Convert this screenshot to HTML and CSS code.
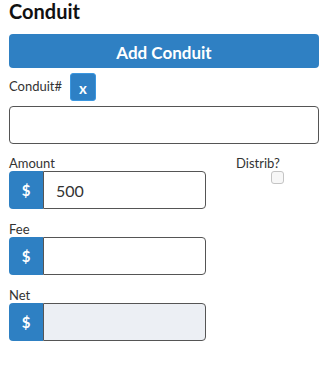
FILE: index.html
```html
<!DOCTYPE html>
<html>
<head>
<meta charset="utf-8">
<link rel="stylesheet" href="styles.css">
</head>
<body>
<div class="page">
  <h1 class="title">Conduit</h1>
  <button class="btn-add">Add Conduit</button>
  <div class="conduit-row">
    <span class="label">Conduit#</span>
    <button class="btn-x">x</button>
  </div>
  <input class="text-input" type="text">
  <div class="money-grid">
    <div class="money-col">
      <div class="field">
        <div class="label">Amount</div>
        <div class="group">
          <span class="addon">$</span>
          <input class="group-input" type="text" value="500">
        </div>
      </div>
      <div class="field">
        <div class="label">Fee</div>
        <div class="group">
          <span class="addon">$</span>
          <input class="group-input" type="text">
        </div>
      </div>
      <div class="field">
        <div class="label">Net</div>
        <div class="group">
          <span class="addon">$</span>
          <input class="group-input readonly" type="text" readonly>
        </div>
      </div>
    </div>
    <div class="distrib-col">
      <div class="label">Distrib?</div>
      <span class="checkbox"></span>
    </div>
  </div>
</div>
</body>
</html>
```
FILE: styles.css
```css
* { box-sizing: border-box; }
body {
  margin: 0;
  font-family: Lato, "Open Sans", sans-serif;
  color: #222;
  background: #fff;
}
.page {
  padding: 0 9px;
  width: 328px;
}
.title {
  margin: 0 0 12px;
  font-size: 20px;
  line-height: 22px;
  font-weight: 700;
  color: #111;
}
.btn-add {
  display: block;
  width: 100%;
  height: 34px;
  border: none;
  border-radius: 4px;
  background: #2f80c3;
  color: #fff;
  font-family: Lato, sans-serif;
  font-weight: 700;
  font-size: 17px;
  padding: 2px 0 0;
}
.conduit-row {
  display: flex;
  align-items: flex-start;
  gap: 8px;
  margin-top: 5px;
  height: 28px;
}
.label {
  font-size: 13px;
  line-height: 16px;
  color: #333;
}
.conduit-row .label {
  margin-top: 5px;
}
.btn-x {
  width: 26px;
  height: 28px;
  border: 1px solid #3b97e0;
  border-radius: 3px;
  background: #2e80c5;
  color: #fff;
  font-family: Lato, sans-serif;
  font-weight: 700;
  font-size: 15px;
  padding: 1px 0 0;
}
.text-input {
  display: block;
  width: 100%;
  height: 38px;
  margin-top: 5px;
  border: 1px solid #555;
  border-radius: 4px;
  background: #fff;
}
.money-grid {
  display: grid;
  grid-template-columns: 197px 1fr;
  margin-top: 11px;
}
.money-col {
  display: flex;
  flex-direction: column;
  gap: 12px;
}
.group {
  display: flex;
  height: 38px;
}
.addon {
  width: 34px;
  flex: none;
  display: flex;
  align-items: center;
  justify-content: center;
  background: #2e80c3;
  color: #fff;
  font-weight: 700;
  font-size: 15px;
  border-radius: 4px 0 0 4px;
}
.group-input {
  flex: 1;
  min-width: 0;
  height: 38px;
  border: 1px solid #555;
  border-radius: 0 4px 4px 0;
  background: #fff;
  font-family: Lato, sans-serif;
  font-size: 16px;
  color: #333;
  padding: 0 12px;
}
.group-input.readonly {
  background: #eceff4;
}
.distrib-col {
  display: flex;
  flex-direction: column;
  padding-left: 30px;
}
.checkbox {
  display: block;
  width: 13px;
  height: 13px;
  margin: 0 0 0 35px;
  border: 1px solid #c4c4c4;
  border-radius: 3px;
  background: #f7f7f7;
}
```
